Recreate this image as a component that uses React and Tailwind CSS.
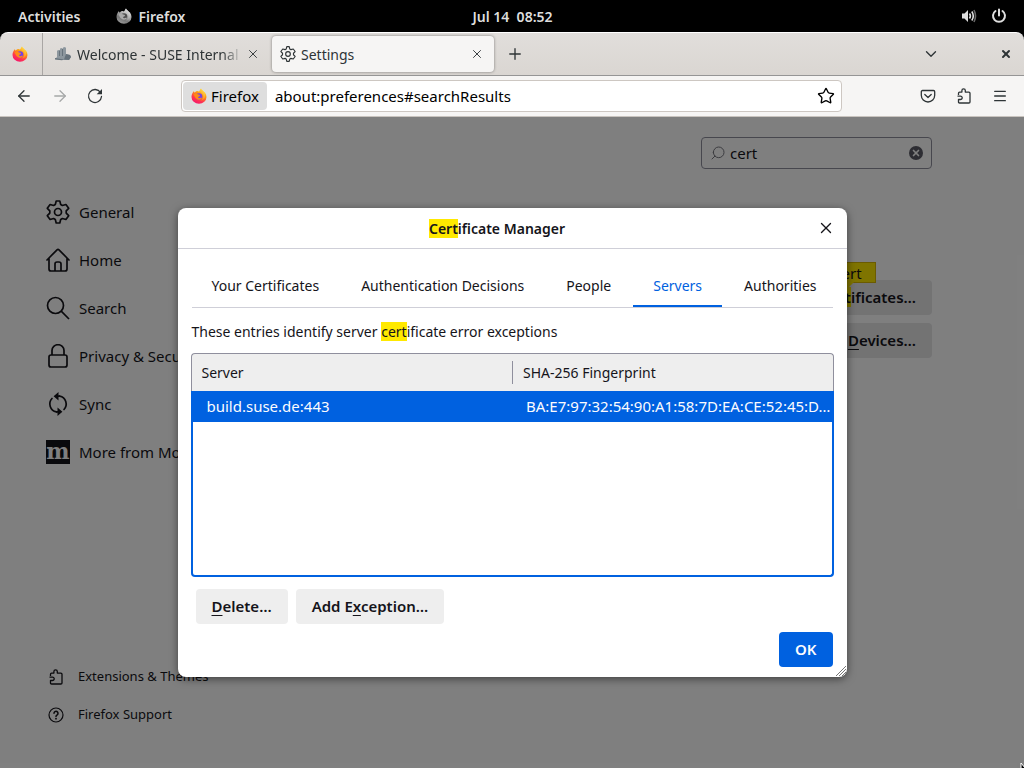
import { useId } from 'react';
import { ArrowLeft, ArrowRight, ChevronDown, Menu, Plus, Search, Star, X } from 'lucide-react';

function FirefoxLogo({ className, mono = false }) {
  const id = useId();
  return (
    <svg viewBox="0 0 32 32" className={className} aria-hidden="true">
      <defs>
        <linearGradient id={`${id}a`} x1="0.8" y1="0.05" x2="0.3" y2="1">
          <stop offset="0" stopColor={mono ? '#f2f2f2' : '#fff44f'} />
          <stop offset="0.35" stopColor={mono ? '#b5b5b5' : '#ff980e'} />
          <stop offset="0.7" stopColor={mono ? '#777777' : '#ff3750'} />
          <stop offset="1" stopColor={mono ? '#9c9c9c' : '#f5156c'} />
        </linearGradient>
        <linearGradient id={`${id}b`} x1="0.7" y1="0" x2="0.3" y2="1">
          <stop offset="0" stopColor={mono ? '#ededed' : '#ffe847'} />
          <stop offset="1" stopColor={mono ? '#8f8f8f' : '#ff7a1a'} />
        </linearGradient>
      </defs>
      <path fill={`url(#${id}a)`} d="M20 1c1 3 4 4 6 7l2 1c2 3 3 6 3 9a15 13.500 0 0 1-30 0c0-5 2-9 5-12 0 2 1 3 2 3 1-2 3-3 5-3 1 0 2 1 3 1 1-2 3-4 4-6Z" />
      <path fill={`url(#${id}b)`} d="M20 1c-2 3-3 5 0 8 3 2 5 5 4 10-1 3-3 5-5 6 6 0 10-5 9-12 0-3-2-5-4-7-2-2-4-3-4-5Z" />
      <circle cx="16" cy="17" r="6.500" fill={mono ? '#4f4f4f' : '#7542e5'} />
      <path fill={mono ? '#aaaaaa' : '#ff8a16'} d="M5 13c4-3 7-2 9 0 2 0 4 0 4 2s-3 2-4 3c0 2 2 3 4 2 2 0 3-1 4 0-2 4-8 5-12 1-2-2-3-5-5-8Z" />
    </svg>
  );
}

function Gear({ className }) {
  return (
    <svg viewBox="0 0 24 24" fill="none" stroke="currentColor" strokeWidth="1.700" strokeLinejoin="round" className={className} aria-hidden="true">
      <path d="M10.200 1h3.600l.9 3.500 1.700 1 3.500-1 2.800 3.800-2.500 2.600v2.200l2.500 2.600-2.800 3.800-3.500-1-1.700 1-.9 3.500h-3.600l-.9-3.500-1.700-1-3.500 1-2.800-3.800 2.500-2.600v-2.200L1.300 8.300l2.800-3.800 3.500 1 1.700-1z" />
      <circle cx="12" cy="12" r="3.500" />
    </svg>
  );
}

function HomeIcon() {
  return (
    <svg viewBox="0 0 24 24" fill="none" stroke="currentColor" strokeWidth="1.700" strokeLinecap="round" strokeLinejoin="round" className="size-6" aria-hidden="true">
      <path d="M1 12 11 1.800q1-1 2 0L23 12M3 10.500V21q0 2 2 2h14q2 0 2-2V10.500M9 23v-7q0-2 2-2h2q2 0 2 2v7" />
    </svg>
  );
}

function SearchIcon() {
  return (
    <svg viewBox="0 0 24 24" fill="none" stroke="currentColor" strokeWidth="1.700" className="size-6" aria-hidden="true">
      <circle cx="9.500" cy="9.500" r="8" />
      <path d="M15.200 15.200 23 23" />
    </svg>
  );
}

function LockIcon() {
  return (
    <svg viewBox="0 0 24 24" fill="none" stroke="currentColor" strokeWidth="1.700" className="size-6" aria-hidden="true">
      <rect x="3" y="11" width="18" height="12" rx="2" />
      <path d="M6 11V6.500a6 5.800 0 0 1 12 0V11" />
    </svg>
  );
}

function Puzzle({ className }) {
  return (
    <svg viewBox="0 0 16 16" fill="none" stroke="currentColor" strokeWidth="1.300" strokeLinejoin="round" className={className} aria-hidden="true">
      <path d="M2.500 7V5.200c0-.7.400-1.100 1.100-1.100h2.300V2.500a1.700 1.700 0 0 1 3.400 0v1.600h3.600c.7 0 1.100.4 1.100 1.100v8.700c0 .7-.4 1.100-1.100 1.100H3.600c-.7 0-1.100-.4-1.100-1.100v-2.400h2a1.700 1.700 0 0 0 0-3.400h-3" />
    </svg>
  );
}

function SyncIcon() {
  return (
    <svg viewBox="0 0 24 24" fill="none" stroke="currentColor" strokeWidth="1.700" className="size-6" aria-hidden="true">
      <path d="M6 6.500a8 8 0 0 0 4.300 13.300M18 17.500A8 8 0 0 0 13.700 4.200" strokeLinecap="round" />
      <path fill="currentColor" stroke="none" d="M12.500 0v8.400L7.600 4.200zM11.500 24v-8.400l4.900 4.200z" />
      <path d="M11 4.200h3M13 19.800h-3" />
    </svg>
  );
}

function MozillaIcon() {
  return (
    <span className="flex size-6 items-center justify-center bg-[#15141a] font-['DejaVu_Serif',serif] text-[22px] leading-none font-bold text-white" aria-hidden="true">
      <span className="pb-0.5">m</span>
    </span>
  );
}

function ReloadIcon() {
  return (
    <svg viewBox="0 0 16 16" fill="none" stroke="currentColor" strokeWidth="1.300" className="size-4" aria-hidden="true">
      <path d="M13.500 4.500A6.500 6.500 0 1 0 14.500 8.500" strokeLinecap="round" />
      <path d="M15 1v5.300H9.700z" fill="currentColor" stroke="none" />
    </svg>
  );
}

function PocketIcon() {
  return (
    <svg viewBox="0 0 16 16" fill="none" stroke="currentColor" strokeWidth="1.300" strokeLinecap="round" strokeLinejoin="round" className="size-4" aria-hidden="true">
      <path d="M2.500 2.500h11c.7 0 1.200.5 1.200 1.200v3.600a6.700 6.700 0 0 1-13.400 0V3.700c0-.7.5-1.200 1.200-1.200zM4.800 6.500 8 9.500l3.200-3" />
    </svg>
  );
}

function VolumeIcon() {
  return (
    <svg viewBox="0 0 16 16" fill="none" stroke="#dedede" strokeWidth="1.600" className="size-4" aria-hidden="true">
      <path d="M1 5.500h2.500L7 2v12l-3.500-3.500H1z" fill="#dedede" stroke="none" />
      <path d="M8.500 5.500q1.800 2.500 0 5M10.800 3.500q3 4.500 0 9" />
      <path d="M13 2q3 6 0 12" stroke="#666666" />
    </svg>
  );
}

function PowerIcon() {
  return (
    <svg viewBox="0 0 16 16" fill="none" stroke="#dedede" strokeWidth="2" strokeLinecap="round" className="size-4" aria-hidden="true">
      <path d="M4.500 3a6 6 0 1 0 7 0M8 1.500v6" />
    </svg>
  );
}

function HelpIcon() {
  return (
    <svg viewBox="0 0 16 16" fill="none" stroke="currentColor" strokeWidth="1.200" strokeLinecap="round" className="size-4" aria-hidden="true">
      <circle cx="8" cy="8" r="7" />
      <path d="M6 6.300a2 2 0 1 1 3.200 1.600c-.8.500-1.200.8-1.200 1.500" strokeWidth="1.500" />
      <circle cx="8" cy="11.700" r=".9" fill="currentColor" stroke="none" />
    </svg>
  );
}

function SiteIcon() {
  return (
    <svg viewBox="0 0 16 16" className="size-4 shrink-0" aria-hidden="true">
      <path fill="#8d979e" d="M2 11V5l1-1 2 .5V2.500L7 2l1 1V1.500L10 1l1 1v6l4 1 1 2-2 3H7l-7-1z" />
      <path fill="#66727b" d="M11 8l4 1 1 2-2 3-5-.5zM4 4.500h1V10H4zM7 3h1v7H7zM0 12l9 1.500-2 .7-7-.7z" />
    </svg>
  );
}

const categories = [
  { label: 'General', icon: <Gear className="size-6" /> },
  { label: 'Home', icon: <HomeIcon /> },
  { label: 'Search', icon: <SearchIcon /> },
  { label: 'Privacy & Security', icon: <LockIcon /> },
  { label: 'Sync', icon: <SyncIcon /> },
  { label: 'More from Mozilla', icon: <MozillaIcon /> },
];

const tabs = ['Your Certificates', 'Authentication Decisions', 'People', 'Servers', 'Authorities'];

function DesktopBar() {
  return (
    <header className="grid h-8 grid-cols-[1fr_auto_1fr] items-center bg-black pr-[17px] pl-[18px] text-[14px] font-semibold text-[#dedede]">
      <div className="flex items-center gap-9">
        <button type="button">Activities</button>
        <button type="button" className="flex items-center gap-1.5">
          <FirefoxLogo mono className="size-4" />
          Firefox
        </button>
      </div>
      <time>Jul 14&nbsp; 08:52</time>
      <div className="flex items-center justify-end gap-3.5">
        <button type="button" aria-label="Volume"><VolumeIcon /></button>
        <button type="button" aria-label="Power"><PowerIcon /></button>
      </div>
    </header>
  );
}

function TabStrip() {
  return (
    <div className="bg-black">
      <div className="flex h-11 items-center rounded-t-lg border-t border-b border-t-white border-b-[#959595] bg-linear-to-b from-[#e1dedb] to-[#dad6d2] text-[#2e3436]">
        <button type="button" aria-label="Firefox View" className="flex h-full w-[43px] items-center border-r border-[#a9a6a4] pl-3">
          <FirefoxLogo className="size-4" />
        </button>
        <div className="flex w-[229px] items-center gap-1 pr-3 pl-3">
          <SiteIcon />
          <span className="ml-0.5 min-w-0 flex-1 overflow-hidden mask-r-from-88% whitespace-nowrap">Welcome - SUSE Internal</span>
          <button type="button" aria-label="Close Welcome tab"><X className="size-3.5" strokeWidth={1.6} /></button>
        </div>
        <div className="flex h-9 w-[222px] items-center gap-[5px] rounded bg-[#f6f5f4] pr-2.5 pl-2 shadow-[0_0_3px_rgba(0,0,0,0.45)]">
          <Gear className="size-4" />
          <span className="flex-1">Settings</span>
          <button type="button" aria-label="Close Settings tab"><X className="size-3.5" strokeWidth={1.6} /></button>
        </div>
        <button type="button" aria-label="New tab" className="ml-3"><Plus className="size-[18px]" strokeWidth={1.8} /></button>
        <div className="flex flex-1 items-center justify-end gap-[60px] pr-3">
          <button type="button" aria-label="List all tabs"><ChevronDown className="size-[18px]" strokeWidth={1.8} /></button>
          <button type="button" aria-label="Close window"><X className="size-3" strokeWidth={4} /></button>
        </div>
      </div>
    </div>
  );
}

function Toolbar() {
  return (
    <div className="flex h-[41px] items-center border-b border-[#c9c4bf] bg-[#f6f5f4] pr-4 pl-[15px] text-[#2e3436]">
      <div className="flex items-center gap-[18px]">
        <button type="button" aria-label="Back"><ArrowLeft className="size-[18px]" strokeWidth={1.7} /></button>
        <button type="button" aria-label="Forward" className="opacity-40"><ArrowRight className="size-[18px]" strokeWidth={1.7} /></button>
        <button type="button" aria-label="Reload"><ReloadIcon /></button>
      </div>
      <div className="mx-[78px] flex h-8 flex-1 items-center rounded border border-[#cdc7c2] bg-white pr-1.5 pl-px text-[15px] text-black">
        <button type="button" className="flex h-7 items-center gap-1 rounded bg-[#dedede] px-2">
          <FirefoxLogo className="size-4" />
          Firefox
        </button>
        <input aria-label="Address" defaultValue="about:preferences#searchResults" className="min-w-0 flex-1 px-2 outline-none" />
        <button type="button" aria-label="Bookmark this page"><Star className="size-[18px]" strokeWidth={1.8} /></button>
      </div>
      <div className="flex items-center gap-5">
        <button type="button" aria-label="Save to Pocket"><PocketIcon /></button>
        <button type="button" aria-label="Extensions"><Puzzle className="size-4" /></button>
        <button type="button" aria-label="Menu"><Menu className="size-4" strokeWidth={2} /></button>
      </div>
    </div>
  );
}

function SettingsPage() {
  return (
    <div className="flex flex-1 bg-white text-[#15141a]">
      <nav className="flex w-[268px] shrink-0 flex-col justify-between pt-[71px] pb-[34px] pl-[46px]">
        <ul>
          {categories.map(({ label, icon }) => (
            <li key={label}>
              <a href="#category" className="flex h-12 items-center gap-[9px] text-[15px] whitespace-nowrap">{icon}{label}</a>
            </li>
          ))}
        </ul>
        <ul className="pl-0.5 text-[13px]">
          <li><a href="#extensions" className="flex h-[38px] items-center gap-3.5"><Puzzle className="size-4" />Extensions &amp; Themes</a></li>
          <li><a href="#support" className="flex h-[38px] items-center gap-3.5"><HelpIcon />Firefox Support</a></li>
        </ul>
      </nav>
      <main className="flex max-w-[664px] flex-1 flex-col pt-5">
        <label className="flex h-8 w-[231px] items-center gap-1 self-end rounded border border-[#8f8f9d] pr-1.5 pl-2">
          <Search className="size-4 -scale-x-100 text-[#77777f]" strokeWidth={1.5} />
          <input aria-label="Find in Settings" defaultValue="cert" className="min-w-0 flex-1 text-[15px] outline-none" />
          <button type="button" aria-label="Clear search" className="flex size-[18px] items-center justify-center">
            <span className="flex size-3.5 items-center justify-center rounded-full bg-[#5b5b66] text-white"><X className="size-2.5" strokeWidth={4} /></span>
          </button>
        </label>
        <h1 className="mt-[33px] text-[22px] leading-8">Search Results</h1>
        <div className="mt-[46px] flex flex-col items-end gap-2 text-[15px] font-semibold">
          <button type="button" className="h-[35px] rounded bg-[#e6e6e7] px-4">
            View{' '}
            <span className="relative">
              <mark className="bg-[#ffe900] text-inherit">Cert</mark>
              <span className="absolute bottom-full left-0 mb-1 flex h-[21px] w-14 items-center justify-center border border-[#d7b600] bg-[#ffe900] text-[15px] font-normal">
                cert
                <svg viewBox="0 0 12 6" className="absolute top-full h-1.5 w-3" aria-hidden="true"><path d="M0 0h12L6 6z" fill="#ffe900" /></svg>
              </span>
            </span>
            ificates…
          </button>
          <button type="button" className="h-[35px] rounded bg-[#e6e6e7] px-4">Security <span className="underline underline-offset-3">D</span>evices…</button>
        </div>
      </main>
    </div>
  );
}

function CertificateManager() {
  return (
    <section role="dialog" aria-labelledby="dialog-title" className="relative w-[669px] max-w-full rounded-lg bg-white text-[#15141a] shadow-[0_2px_8px_rgba(0,0,0,0.5)]">
      <header className="flex h-[41px] items-center border-b border-[#cfcfd8] pr-3">
        <h2 id="dialog-title" className="flex-1 text-center font-semibold"><mark className="bg-[#ffe900] text-inherit">Cert</mark>ificate Manager</h2>
        <button type="button" aria-label="Close"><X className="size-[18px]" strokeWidth={1.8} /></button>
      </header>
      <div className="px-3.5 pt-4 pb-2.5">
        <div role="tablist" className="flex h-[43px] gap-0.5 border-b border-[#cfcfd8]">
          {tabs.map((tab) => (
            <button
              key={tab}
              type="button"
              role="tab"
              aria-selected={tab === 'Servers'}
              className="border-b-2 border-transparent px-5 whitespace-nowrap aria-selected:border-[#0061e0] aria-selected:text-[#0061e0]"
            >
              {tab}
            </button>
          ))}
        </div>
        <p className="mt-3.5 leading-5">These entries identify server <mark className="bg-[#ffe900] text-inherit">cert</mark>ificate error exceptions</p>
        <div className="-mx-px mt-[11px] flex h-56 flex-col">
          <table className="w-full table-fixed border-separate border-spacing-0 text-left">
            <thead>
              <tr className="h-[38px]">
                <th scope="col" className="rounded-tl border-t border-l border-[#8f8f9d] bg-[#eeeeee] p-0 pl-2.5 font-normal">Server</th>
                <th scope="col" className="rounded-tr border-t border-r border-[#8f8f9d] bg-[#eeeeee] p-0 font-normal">
                  <span className="flex h-[23px] items-center border-l border-[#8f8f9d] pl-2.5">SHA-256 Fingerprint</span>
                </th>
              </tr>
            </thead>
            <tbody>
              <tr className="h-[31px] bg-[#0061e0] text-[15px] text-[#fbfbfe]">
                <td className="p-0 pl-4">build.suse.de:443</td>
                <td className="p-0 pl-3.5 whitespace-nowrap">BA:E7:97:32:54:90:A1:58:7D:EA:CE:52:45:D…</td>
              </tr>
            </tbody>
          </table>
          <div className="flex-1 rounded-b border-x-2 border-b-2 border-[#0061e0]" />
        </div>
        <div className="mt-3 ml-1 flex gap-2 text-[15px] font-semibold">
          <button type="button" className="h-[35px] rounded bg-[#eeeeee] px-4"><span className="underline underline-offset-3">D</span>elete…</button>
          <button type="button" className="h-[35px] rounded bg-[#eeeeee] px-4">Add E<span className="underline underline-offset-3">x</span>ception…</button>
        </div>
        <div className="mt-2 flex justify-end">
          <button type="button" className="h-[35px] rounded bg-[#0061e0] px-4 text-[15px] font-semibold text-[#fbfbfe]">OK</button>
        </div>
      </div>
      <svg viewBox="0 0 12 12" className="absolute right-0 bottom-0 size-3" fill="none" stroke="#777777" aria-hidden="true">
        <path d="M1 11 11 1M4 11l7-7M7 11l4-4" />
      </svg>
    </section>
  );
}

export default function App() {
  return (
    <div className="flex min-h-screen flex-col overflow-hidden bg-black font-['Noto_Sans',sans-serif] text-[14px]">
      <DesktopBar />
      <TabStrip />
      <Toolbar />
      <div className="relative flex flex-1">
        <SettingsPage />
        <div className="absolute inset-0 flex items-center justify-center bg-black/50">
          <CertificateManager />
        </div>
        <svg viewBox="0 0 12 18" className="absolute -right-2 -bottom-3 h-[18px] w-3" aria-hidden="true">
          <path d="M1 1v14l3.500-3.500h5z" fill="black" stroke="white" />
        </svg>
      </div>
    </div>
  );
}
